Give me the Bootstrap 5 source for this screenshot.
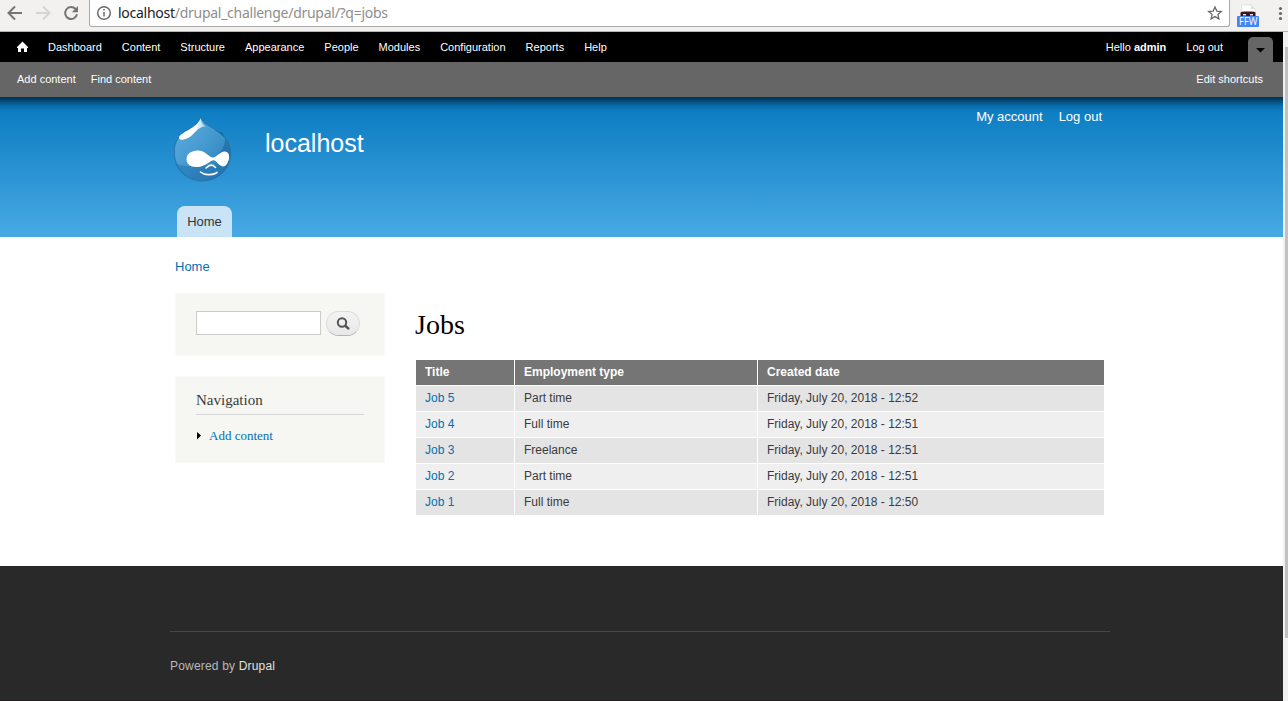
<!DOCTYPE html>
<html lang="en">
<head>
<meta charset="utf-8">
<title>Jobs | localhost</title>
<link href="https://cdn.jsdelivr.net/npm/bootstrap@5.3.0/dist/css/bootstrap.min.css" rel="stylesheet">
<style>
body{width:1288px;height:701px;overflow:hidden;font-family:"Liberation Sans",sans-serif;font-size:13px;line-height:20px;color:#3b3b3b;background:#fff}
a{text-decoration:none;color:#0071b3}
.chrome-bar{height:32px;background:#f2f1f0;border-bottom:1px solid #b4b3b2;flex:none}
.chrome-bar svg{flex:none}
.address{width:1141px;height:27px;background:#fff;border:1px solid #a9a9a9;border-top:0;border-radius:0 0 3px 3px;margin-left:9px}
.url{font:14px/26px "Noto Sans",sans-serif;letter-spacing:-.27px;color:#8e8e8e;white-space:nowrap}
.url b{font-weight:400;color:#222}
.viewport{height:669px}
.page{width:1283px}
.toolbar-menu{height:30px;background:#000;font-size:11px}
.toolbar-menu a,.toolbar-menu span,.shortcuts a{color:#fefefe}
.menu-toggle{width:25px;height:25px;background:#666;border-radius:5px 5px 0 0;margin:0 10px 0 25px}
.shortcuts{height:35px;background:#666;font-size:11px;padding:0 20px 2px 17px}
.site-header{height:140px;background:linear-gradient(#002f4d 0,rgba(0,45,75,.6) 4px,rgba(0,60,100,.22) 9px,transparent 15px),linear-gradient(#0779bf,#48a9e4)}
.inner{width:940px;margin-left:170px}
.site-name{font-size:25px;line-height:30px;color:#fffeff;margin:31px 0 0 33px}
.account{gap:16px;padding:10px 8px 0 0}
.account a{color:#fff}
.home-tab{width:55px;height:31px;background:#c8e4f6;border-radius:8px 8px 0 0;color:#333;margin-left:7px;line-height:32px}
.crumb{padding:20px 0 0 5px;height:56px}
.side{width:210px;margin-left:5px}
.block-box{background:#f6f6f2;border:1px solid #f9f9f6;padding:17px 20px}
.search-box{height:63px;margin-bottom:20px}
.search-box input{width:125px;height:24px;border:1px solid #ccc;border-radius:0;padding:2px}
.search-btn{width:34px;height:25px;border:1px solid #dcdcdc;border-bottom-color:#b4b4b4;border-radius:13px;background:linear-gradient(#f3f3f3,#e8e8e8);margin-left:5px;padding:0}
.nav-box{height:87px;padding-top:14px;font-family:"Liberation Serif",serif}
.nav-box h2{font-size:15px;line-height:18px;height:24px;margin:0 0 11px;border-bottom:1px solid #d6d6d6;color:#3b3b3b;font-weight:400}
.content-col{width:690px;margin-left:30px}
.content-col h1{font:28px/34px "Liberation Serif",serif;color:#000;margin:15px 0 17px}
.jobs{width:690px;table-layout:fixed;border-collapse:separate;border-spacing:1px;font-size:12px;line-height:17px}
.jobs th,.jobs td{height:25px;padding:4px 9px}
.jobs th{background:#757575;color:#fff}
.jobs td{background:#efefef}
.jobs tr:nth-child(odd) td{background:#e4e4e4}
.site-footer{height:135px;background:#292929;border-bottom:1px solid #231c20;padding-top:65px;font-size:12px;letter-spacing:.18px;color:#b8b8b8}
.site-footer .inner{border-top:1px solid #474747;padding-top:24px}
.site-footer a{color:#e0e0e0}
.main-area{height:329px}
.scroller{width:5px;background:#f1f1f1}
.thumb{width:3px;height:591px;margin:15px 0 0 2px;background:#c1c1c1}
</style>
</head>
<body>
<div class="chrome-bar d-flex">
  <svg width="80" height="30" fill="none" stroke-width="2">
    <path d="M22 13H9M15 6.500 8.500 13l6.500 6.500" stroke="#757575"/>
    <path d="M36 13h13M43 6.500l6.500 6.500-6.500 6.500" stroke="#d5d4d3"/>
    <path d="M75.600 9A6 6 0 1 0 77 14.300" stroke="#757575"/><path d="M78 6v6.200h-6.200z" fill="#757575"/>
  </svg>
  <div class="address d-flex">
    <svg width="28" height="26" fill="none" stroke="#6c6c6c" stroke-width="1.500"><circle cx="14" cy="13" r="6.300"/><path d="M14 12v4.500M14 9v1.600"/></svg>
    <div class="url"><b>localhost</b>/drupal_challenge/drupal/?q=jobs</div>
    <svg class="ms-auto" width="28" height="26" fill="none" stroke="#6a6a6a" stroke-width="1.300"><path d="M14 7l1.800 4.100 4.500.4-3.400 3 1 4.400-3.900-2.300-3.900 2.300 1-4.400-3.400-3 4.500-.4z"/></svg>
  </div>
  <svg width="58" height="31">
    <path d="M11.500 5h9.500l4 4v8H11.500z" fill="#fff" stroke="#d5d5d5" stroke-width=".6"/><path d="M21 5v4h4" fill="#ddd"/>
    <path d="M10.500 12.500q1-1 4-1h7q3 0 4 1V17h-15z" fill="#39171c"/><path d="M13 14h3v1.500h-3zM20 14h3v1.500h-3z" fill="#e9dcdd"/>
    <rect x="7" y="16" width="22" height="11" rx="1" fill="#4385f4"/>
    <text x="9" y="25.300" font-family="Open Sans,sans-serif" font-size="10" fill="#fff" textLength="18.500" lengthAdjust="spacingAndGlyphs">FFW</text>
    <g fill="#666"><circle cx="50.500" cy="8.500" r="1.600"/><circle cx="50.500" cy="13.500" r="1.600"/><circle cx="50.500" cy="18.500" r="1.600"/></g>
  </svg>
</div>
<div class="viewport d-flex">
  <div class="page">
    <nav class="toolbar-menu d-flex align-items-center">
      <a href="#" class="d-flex"><svg width="48" height="30"><path d="M22.500 9.500 28 15v1h-1v4h-3v-3.500h-3V20h-3v-4h-1v-1z" fill="#fff"/></svg></a>
      <div class="d-flex" style="gap:20px">
        <a href="#">Dashboard</a><a href="#">Content</a><a href="#">Structure</a><a href="#">Appearance</a><a href="#">People</a><a href="#">Modules</a><a href="#">Configuration</a><a href="#">Reports</a><a href="#">Help</a>
      </div>
      <span class="ms-auto">Hello <strong>admin</strong></span>
      <a href="#" style="margin-left:20px">Log out</a>
      <div class="menu-toggle align-self-end"><svg class="d-block" width="25" height="25"><path d="M8 11h9l-4.500 4.500z" fill="#000"/></svg></div>
    </nav>
    <div class="shortcuts d-flex align-items-center">
      <a href="#">Add content</a><a href="#" style="margin-left:15px">Find content</a><a href="#" class="ms-auto">Edit shortcuts</a>
    </div>
    <header class="site-header">
      <div class="inner h-100 d-flex flex-column">
        <div class="d-flex flex-grow-1">
          <svg width="62" height="90" viewBox="0 0 62 90">
            <defs><linearGradient id="drop" x1="0" y1="0" x2="1" y2="1"><stop offset="0" stop-color="#62afdf"/><stop offset=".5" stop-color="#4399cf"/><stop offset="1" stop-color="#2676ae"/></linearGradient>
            <linearGradient id="shine" x1="0" y1="0" x2="1" y2="0"><stop offset="0" stop-color="#fff"/><stop offset=".6" stop-color="#fff"/><stop offset="1" stop-color="#a3d2ef"/></linearGradient></defs>
            <path d="M30.700 20C31.500 24 35 26.500 40 29.500 52 36 60.700 44 60.700 55.500 60.700 72 48 84 32 84S4.300 71 4.300 55C4.300 44 10 37 18.500 32 25 28.500 29.500 25 30.700 20z" fill="url(#drop)" stroke="#24699b" stroke-width=".7"/>
            <path d="M44 33C56 39 62 49 60 61 57 54 51 57 44 62 55 52 58 42 52 35z" fill="#15669f" opacity=".6"/>
            <path d="M5 66Q10 69 19 69L44 68 59 65Q54 83 32 83.500 12 83 5 66z" fill="#1c6ba8" opacity=".45"/>
            <path d="M30.700 21C31.300 25.500 33 27.500 35.500 29.500 27 29.500 24.500 38 18 41 12.500 43.500 8.500 43.500 9 40 12 34.500 27 31.500 30.700 21z" fill="url(#shine)"/>
            <path d="M27.500 53.500C35 53 39 60.500 43 60.500 47 60.500 50 54 55 54.500 60 55 60 61 57.500 66 54.500 71.500 51 69.500 48 66.500 45 63 44 62.500 41 64 35 68 32 70 26 70 20 70 16.500 66.500 16.500 62.500 16.500 57.500 20 54 27.500 53.500z" fill="#fff"/>
            <path d="M36 71q5.500-5.500 9.500-.5M30.500 75q3.500 3 9 2.600t7.500-2.300" fill="none" stroke="#fff" stroke-width="1.600" stroke-linecap="round"/>
          </svg>
          <div class="site-name">localhost</div>
          <div class="account d-flex ms-auto"><a href="#">My account</a><a href="#">Log out</a></div>
        </div>
        <a href="#" class="home-tab text-center">Home</a>
      </div>
    </header>
    <main class="main-area">
      <div class="inner">
        <div class="crumb"><a href="#">Home</a></div>
        <div class="d-flex align-items-start">
          <aside class="side">
            <div class="block-box search-box d-flex">
              <input type="text" aria-label="Search">
              <button class="search-btn d-flex" aria-label="Search"><svg width="32" height="23" fill="none" stroke="#545454"><circle cx="15" cy="10.500" r="4.200" stroke-width="2"/><path d="M18 13.500l4 3.700" stroke-width="2.400"/></svg></button>
            </div>
            <div class="block-box nav-box">
              <h2>Navigation</h2>
              <div class="d-flex"><svg width="13" height="20"><path d="M1 6l4 3.500-4 4z" fill="#000"/></svg><a href="#">Add content</a></div>
            </div>
          </aside>
          <section class="content-col">
            <h1>Jobs</h1>
            <table class="jobs">
              <colgroup><col style="width:98px"><col style="width:242px"><col></colgroup>
              <thead><tr><th>Title</th><th>Employment type</th><th>Created date</th></tr></thead>
              <tbody>
                <tr><td><a href="#">Job 5</a></td><td>Part time</td><td>Friday, July 20, 2018 - 12:52</td></tr>
                <tr><td><a href="#">Job 4</a></td><td>Full time</td><td>Friday, July 20, 2018 - 12:51</td></tr>
                <tr><td><a href="#">Job 3</a></td><td>Freelance</td><td>Friday, July 20, 2018 - 12:51</td></tr>
                <tr><td><a href="#">Job 2</a></td><td>Part time</td><td>Friday, July 20, 2018 - 12:51</td></tr>
                <tr><td><a href="#">Job 1</a></td><td>Full time</td><td>Friday, July 20, 2018 - 12:50</td></tr>
              </tbody>
            </table>
          </section>
        </div>
      </div>
    </main>
    <footer class="site-footer"><div class="inner">Powered by <a href="#">Drupal</a></div></footer>
  </div>
  <div class="scroller"><div class="thumb"></div></div>
</div>
<script src="https://cdn.jsdelivr.net/npm/bootstrap@5.3.0/dist/js/bootstrap.bundle.min.js"></script>
</body>
</html>
